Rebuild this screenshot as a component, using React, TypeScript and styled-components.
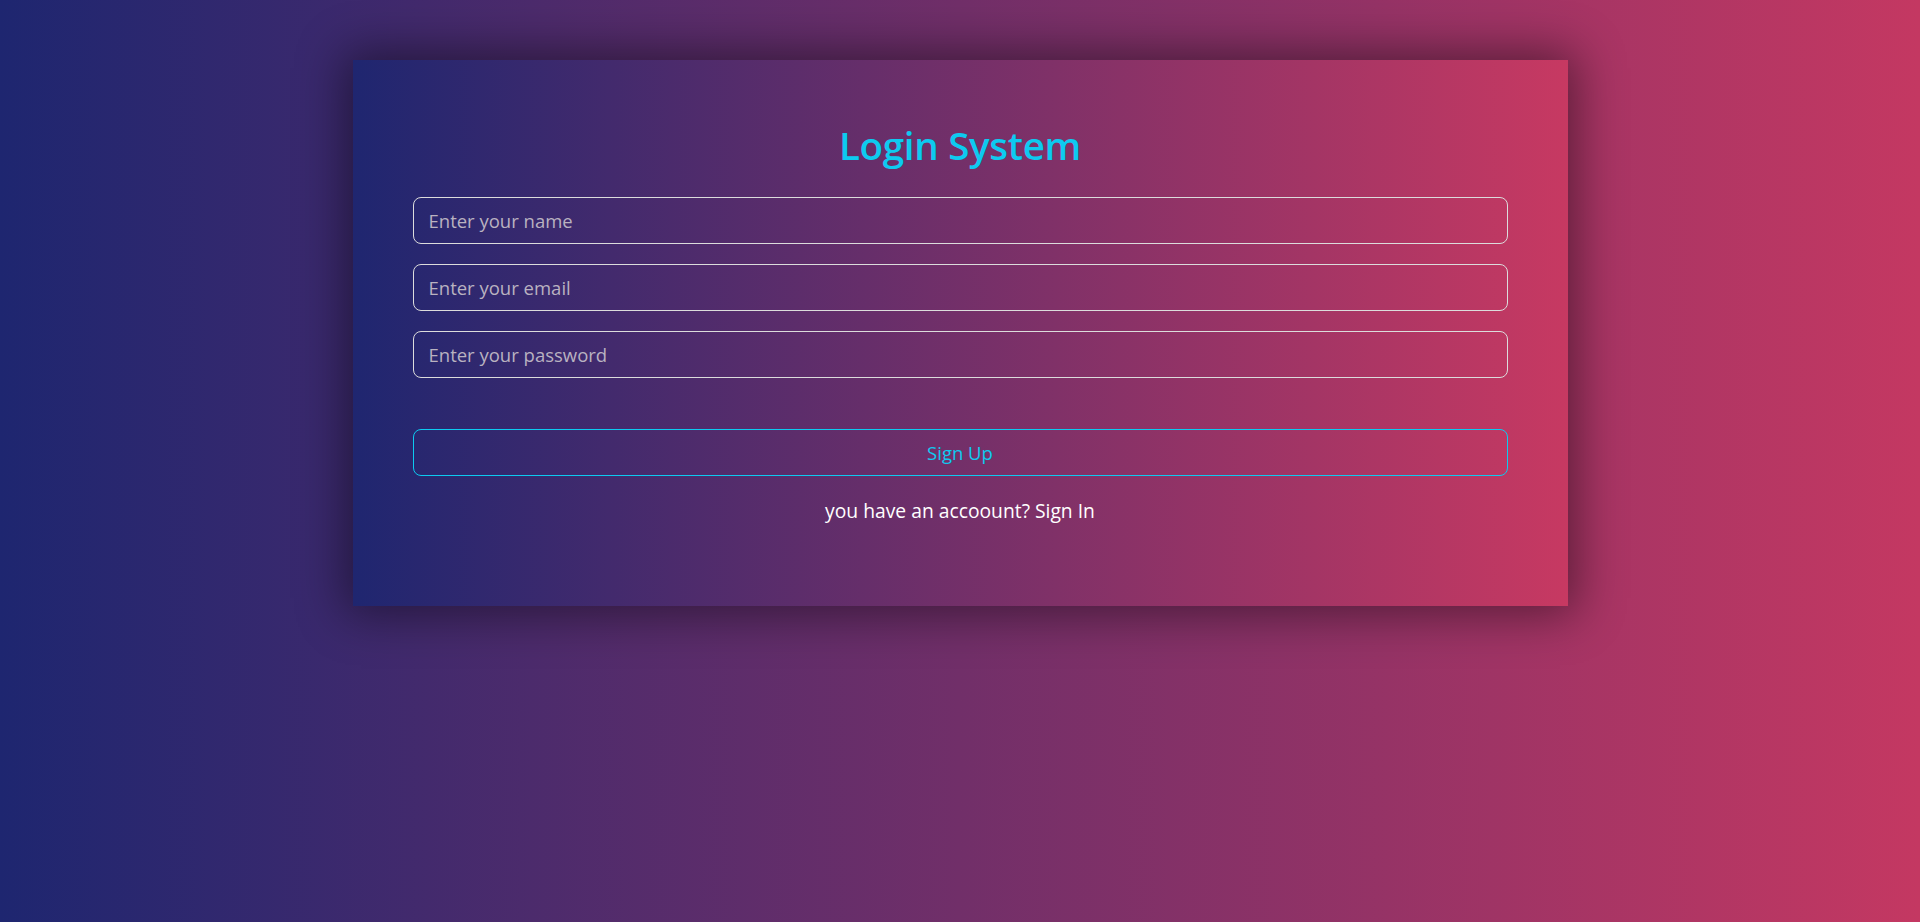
import React from "react";
import styled, { createGlobalStyle } from "styled-components";

const GlobalStyle = createGlobalStyle`
  html, body { margin: 0; padding: 0; }
  body {
    font-family: "Open Sans", "Noto Sans", sans-serif;
    background: linear-gradient(90deg, #1e2670 0%, #c43862 100%);
    min-height: 100vh;
  }
  * { box-sizing: border-box; }
`;

const Page = styled.div`
  min-height: 922px;
  padding-top: 60px;
  background: linear-gradient(90deg, #1e2670 0%, #c43862 100%);
`;

const Card = styled.form`
  width: 1215px;
  height: 546px;
  margin: 0 auto;
  padding: 57px 60px 0;
  background: linear-gradient(90deg, #1f2670 0%, #c73962 100%);
  box-shadow: 0 0 45px 8px rgba(0, 0, 0, 0.45);
  display: flex;
  flex-direction: column;
`;

const Title = styled.h1`
  margin: 0 0 22.5px;
  text-align: center;
  font-size: 38.5px;
  font-weight: 600;
  line-height: 1.5;
  color: #0dcaf0;
  letter-spacing: -0.3px;
`;

const Field = styled.input`
  display: block;
  width: 100%;
  height: 47px;
  margin-bottom: 20px;
  padding: 0 15px;
  font-family: inherit;
  font-size: 18.5px;
  color: #fff;
  background: transparent;
  border: 1px solid #dcdcdc;
  border-radius: 8px;
  outline: none;
  &::placeholder {
    color: #b9b2c0;
    opacity: 1;
  }
`;

const SubmitButton = styled.button`
  margin-top: 31px;
  width: 100%;
  height: 47px;
  font-family: inherit;
  font-size: 18.5px;
  color: #0dcaf0;
  background: transparent;
  border: 1px solid #0dcaf0;
  border-radius: 8px;
  cursor: pointer;
`;

const Footer = styled.p`
  margin: 21px 0 0;
  text-align: center;
  font-size: 19.3px;
  line-height: 1.5;
  color: #fff;
`;

export default function App() {
  return (
    <>
      <GlobalStyle />
      <Page>
        <Card onSubmit={(e) => e.preventDefault()}>
          <Title>Login System</Title>
          <Field type="text" placeholder="Enter your name" />
          <Field type="email" placeholder="Enter your email" />
          <Field type="password" placeholder="Enter your password" />
          <SubmitButton type="submit">Sign Up</SubmitButton>
          <Footer>you have an accoount? Sign In</Footer>
        </Card>
      </Page>
    </>
  );
}
